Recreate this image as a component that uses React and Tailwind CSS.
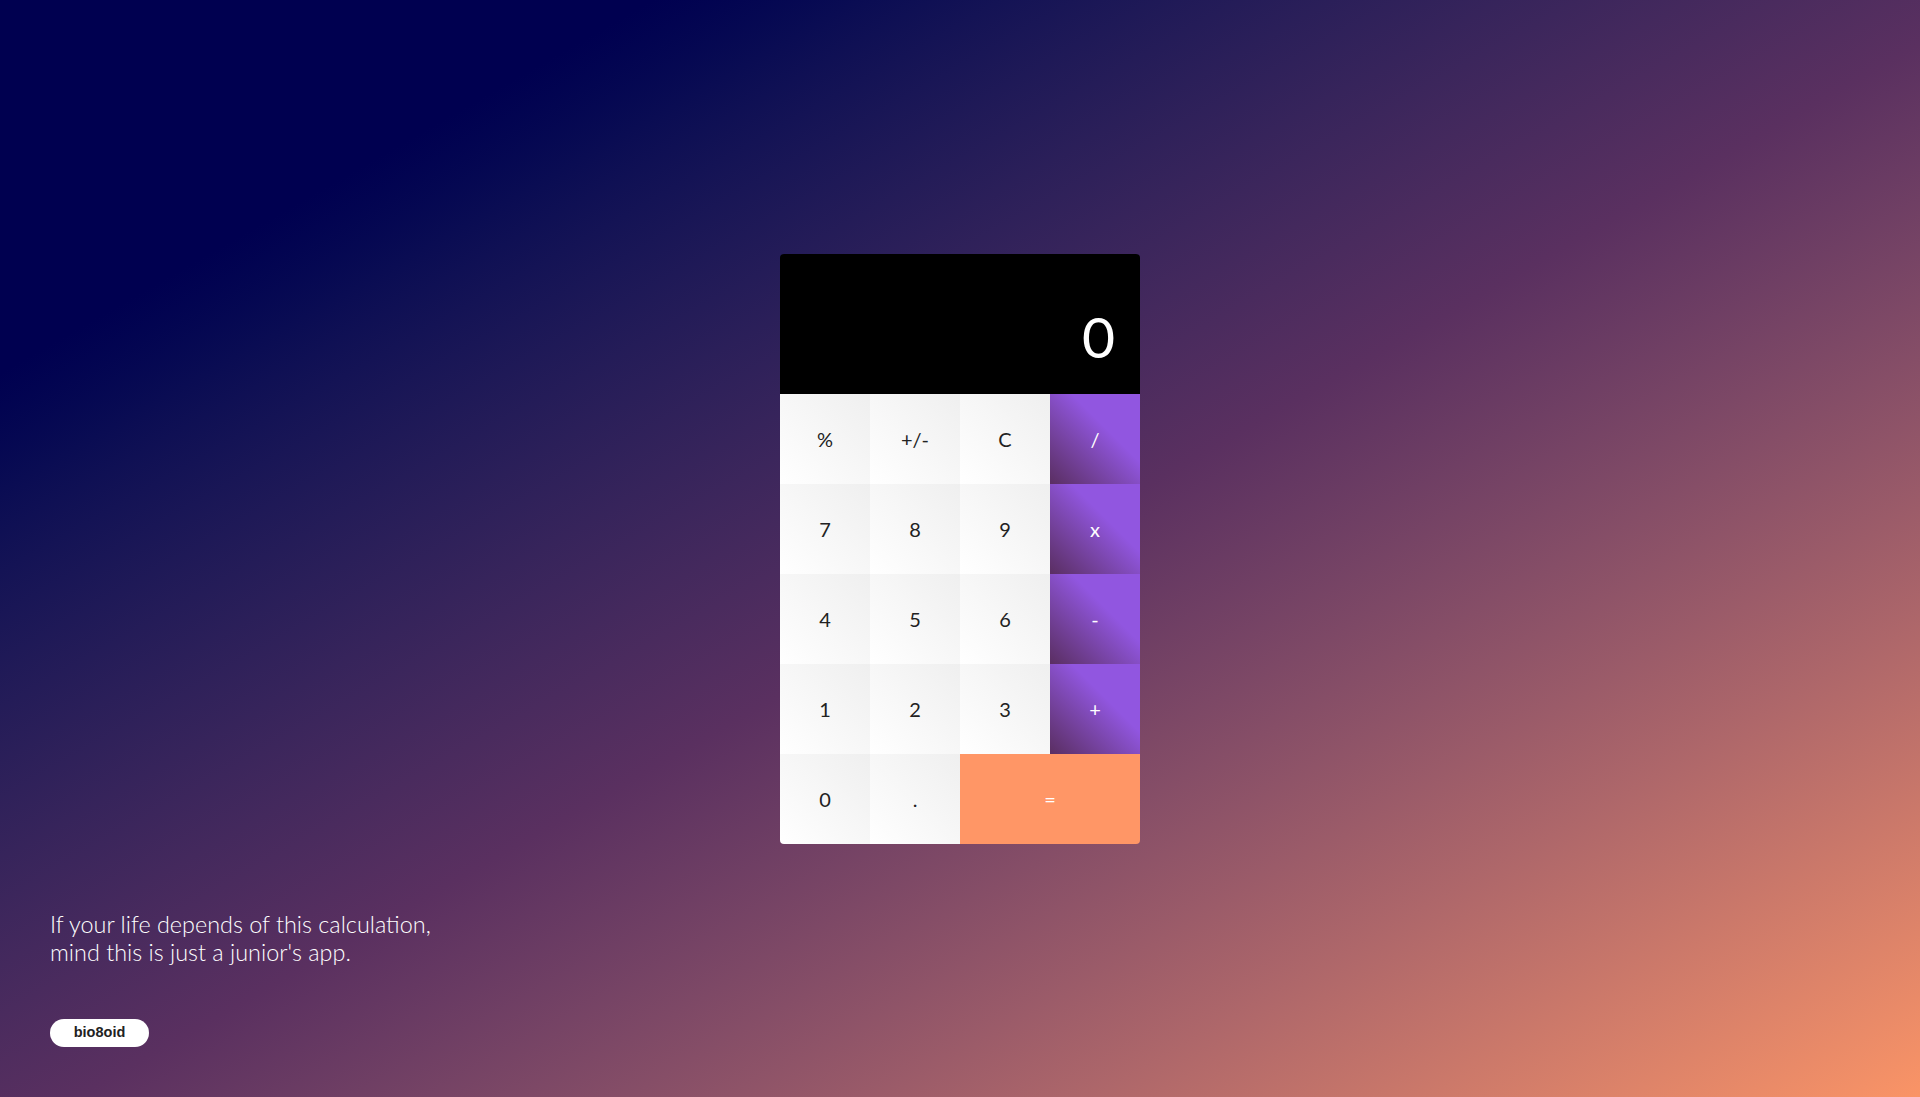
import { useState } from "react";

// Calculator keys, row by row. "=" spans two columns.
const KEYS = [
  { label: "%", kind: "fn" },
  { label: "+/-", kind: "fn" },
  { label: "C", kind: "fn" },
  { label: "/", kind: "op" },
  { label: "7", kind: "num" },
  { label: "8", kind: "num" },
  { label: "9", kind: "num" },
  { label: "x", kind: "op" },
  { label: "4", kind: "num" },
  { label: "5", kind: "num" },
  { label: "6", kind: "num" },
  { label: "-", kind: "op" },
  { label: "1", kind: "num" },
  { label: "2", kind: "num" },
  { label: "3", kind: "num" },
  { label: "+", kind: "op" },
  { label: "0", kind: "num" },
  { label: ".", kind: "num" },
  { label: "=", kind: "eq" },
];

function keyClass(kind) {
  if (kind === "op")
    return "bg-gradient-to-tr from-[#5a2e62] to-[#9156e0] to-[62%] text-white";
  if (kind === "eq") return "col-span-2 bg-[#ff9666] text-white";
  return "bg-gradient-to-tr from-white to-[#efefef] text-[#222]";
}

export default function App() {
  const [display] = useState("0");

  return (
    <main
      className="grid h-screen w-full grid-rows-[1fr_auto_1fr] bg-gradient-to-br from-[#000050] from-[17%] via-[#5a3060] via-[52%] to-[#fa9466]"
      style={{ fontFamily: "Lato, 'Open Sans', sans-serif" }}
    >
      <div />

      <section className="mx-auto w-[360px] overflow-hidden rounded">
        <div className="flex h-[140px] items-end justify-end bg-black pr-[25px] pb-[29px] text-[57px] font-normal leading-none text-white">
          {display}
        </div>
        <div className="grid grid-cols-4 auto-rows-[90px]">
          {KEYS.map((k) => (
            <button
              key={k.label}
              className={`flex items-center justify-center text-[20px] ${keyClass(k.kind)}`}
            >
              {k.label}
            </button>
          ))}
        </div>
      </section>

      <footer className="flex flex-col items-start justify-end gap-[53px] px-[50px] pb-[50px]">
        <p className="text-[23.4px] font-light leading-[28px] text-white">
          If your life depends of this calculation,
          <br />
          mind this is just a junior's app.
        </p>
        <span
          className="flex h-[28px] w-[99px] items-center justify-center rounded-full bg-white text-[14.5px] font-bold text-[#222]"
          style={{ fontFamily: "'Liberation Sans', Arial, sans-serif" }}
        >
          bio8oid
        </span>
      </footer>
    </main>
  );
}
